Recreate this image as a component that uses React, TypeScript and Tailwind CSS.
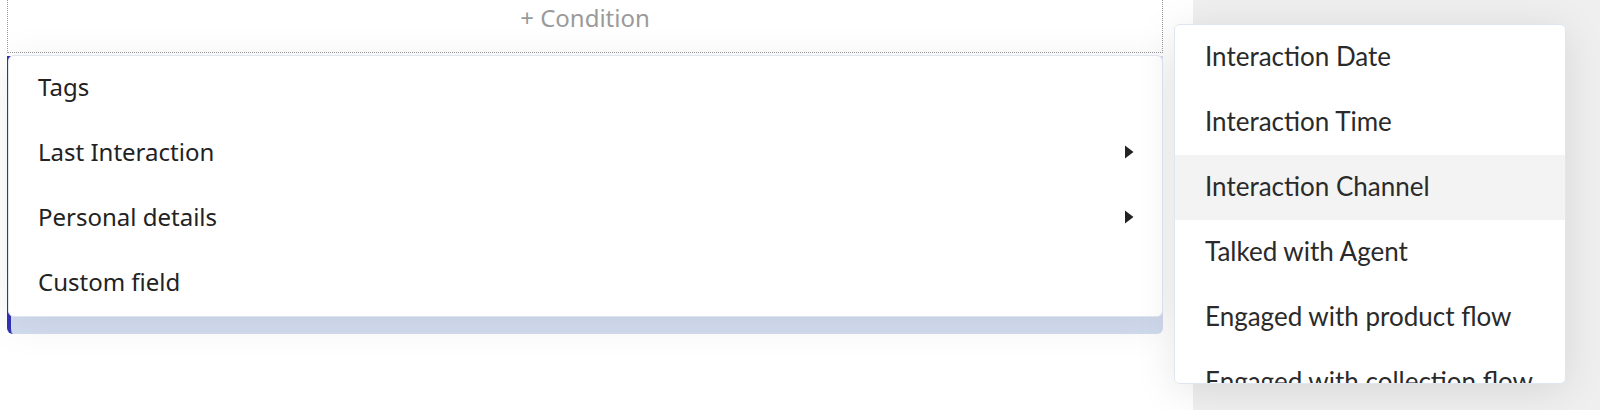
import { useState } from "react";

const mainItems = [
  { label: "Tags", sub: false },
  { label: "Last Interaction", sub: true },
  { label: "Personal details", sub: true },
  { label: "Custom field", sub: false },
];

const subItems = [
  "Interaction Date",
  "Interaction Time",
  "Interaction Channel",
  "Talked with Agent",
  "Engaged with product flow",
  "Engaged with collection flow",
];

function Caret() {
  return (
    <svg width="10" height="14" viewBox="0 0 10 14" className="shrink-0">
      <path d="M1 0.5 L9.5 7 L1 13.5 Z" fill="#222" />
    </svg>
  );
}

export default function App() {
  const [hovered, setHovered] = useState(2);

  return (
    <div className="relative flex h-[410px] w-full overflow-hidden bg-white">
      {/* main builder column */}
      <div className="flex w-[1193px] shrink-0 flex-col bg-white pl-[7px] pr-[30px]">
        <div
          className="-mt-6 flex h-[77px] items-center justify-center border border-dotted border-[#9a9a9a] pt-[7px] text-[24px] text-[#9a9a9a]"
          style={{ fontFamily: '"Noto Sans", sans-serif' }}
        >
          + Condition
        </div>
        <div className="mt-[3px] h-[278px] rounded-b-md border-l-4 border-[#3232b4] bg-[#d3ddf0]" />
      </div>

      {/* side panel */}
      <div className="flex-1 bg-[#efefef]" />

      {/* attribute menu */}
      <div
        className="absolute left-[8px] top-[55px] flex w-[1155px] flex-col rounded-md border border-[#dfe6f1] bg-white shadow-[0_6px_40px_rgba(0,0,0,0.08)]"
        style={{ fontFamily: '"Noto Sans", sans-serif' }}
      >
        {mainItems.map((it) => (
          <div
            key={it.label}
            className="flex h-[65px] items-center justify-between pb-[4px] pl-[29px] pr-[28px] text-[24px] text-[#222]"
          >
            <span>{it.label}</span>
            {it.sub && <Caret />}
          </div>
        ))}
      </div>

      {/* Last Interaction submenu */}
      <div
        className="absolute left-[1174px] top-[24px] flex h-[360px] w-[392px] flex-col overflow-hidden rounded-md border border-[#dfe6f1] bg-white shadow-[0_6px_40px_rgba(0,0,0,0.1)]"
        style={{ fontFamily: "Lato, sans-serif" }}
      >
        {subItems.map((label, i) => (
          <div
            key={label}
            onMouseEnter={() => setHovered(i)}
            className={
              "flex h-[65px] shrink-0 items-center pb-[2px] pl-[30px] text-[26px] text-[#2a2a2a] " +
              (hovered === i ? "bg-[#f3f3f3]" : "bg-white")
            }
          >
            {label}
          </div>
        ))}
      </div>
    </div>
  );
}
